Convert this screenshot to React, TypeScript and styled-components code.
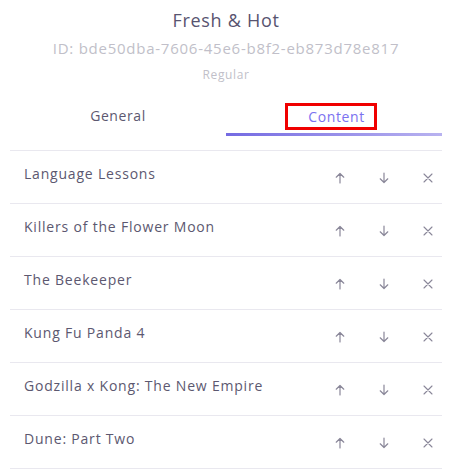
import styled, { createGlobalStyle } from 'styled-components';

const GlobalStyle = createGlobalStyle`
  html, body {
    margin: 0;
    padding: 0;
    background: #ffffff;
  }
  body {
    font-family: "Open Sans", "Liberation Sans", sans-serif;
  }
`;

const Panel = styled.div`
  width: 459px;
  height: 470px;
  overflow: hidden;
  box-sizing: border-box;
  padding: 0 17px 0 10px;
`;

const Header = styled.div`
  display: flex;
  flex-direction: column;
  align-items: center;
  padding-top: 7px;
`;

const Title = styled.h2`
  margin: 0;
  font-size: 18px;
  font-weight: 400;
  line-height: 26px;
  letter-spacing: 0.7px;
  color: #585470;
`;

const Identifier = styled.div`
  margin-top: 5px;
  font-size: 15px;
  line-height: 20px;
  letter-spacing: 0.75px;
  color: #c1bfc9;
`;

const Kind = styled.div`
  margin-top: 9px;
  font-size: 12px;
  line-height: 16px;
  letter-spacing: 0.6px;
  color: #c1bfc9;
`;

const Tabs = styled.div`
  display: grid;
  grid-template-columns: 1fr 1fr;
  margin-top: 16px;
`;

const Tab = styled.div<{ $active?: boolean }>`
  display: flex;
  justify-content: center;
  align-items: center;
  height: 32px;
  padding-bottom: 2px;
  font-size: 14px;
  letter-spacing: 0.6px;
  color: ${p => (p.$active ? '#7b72f0' : '#5c5870')};
  border-bottom: 3px solid transparent;
  border-image: ${p =>
    p.$active ? 'linear-gradient(90deg, #746ae2, #b9b3f0) 1' : 'none'};
`;

const Highlight = styled.span`
  box-sizing: border-box;
  display: inline-flex;
  align-items: center;
  height: 27px;
  padding: 0 9px 0 20px;
  border: 3px solid #f00000;
  margin-left: -6px;
  margin-top: 2px;
`;

const List = styled.div`
  margin-top: 14px;
  border-top: 1px solid #e9e8ef;
`;

const Row = styled.div`
  display: flex;
  align-items: center;
  height: 52px;
  border-bottom: 1px solid #e9e8ef;
  padding-left: 14px;
`;

const Name = styled.div`
  flex: 1;
  font-size: 14px;
  letter-spacing: 0.8px;
  color: #5c5870;
  margin-top: -8px;
`;

const Actions = styled.div`
  display: flex;
  align-items: center;
  gap: 24px;
  margin-right: 4px;
  margin-top: 2px;
`;

const IconButton = styled.button`
  width: 20px;
  height: 20px;
  padding: 0;
  border: none;
  background: none;
  display: flex;
  align-items: center;
  justify-content: center;
  color: #8a8799;
`;

const ArrowUp = () => (
  <svg width="12" height="12" viewBox="0 0 12 12" fill="none" stroke="currentColor" strokeWidth="1.2" strokeLinecap="round" strokeLinejoin="round">
    <path d="M6 11V1.5M2.2 5.2L6 1.5l3.8 3.7" />
  </svg>
);

const ArrowDown = () => (
  <svg width="12" height="12" viewBox="0 0 12 12" fill="none" stroke="currentColor" strokeWidth="1.2" strokeLinecap="round" strokeLinejoin="round">
    <path d="M6 1v9.5M2.2 6.8L6 10.5l3.8-3.7" />
  </svg>
);

const Close = () => (
  <svg width="10" height="10" viewBox="0 0 10 10" fill="none" stroke="currentColor" strokeWidth="1.1" strokeLinecap="round">
    <path d="M1 1l8 8M9 1L1 9" />
  </svg>
);

const ITEMS = [
  'Language Lessons',
  'Killers of the Flower Moon',
  'The Beekeeper',
  'Kung Fu Panda 4',
  'Godzilla x Kong: The New Empire',
  'Dune: Part Two',
];

export default function App() {
  return (
    <>
      <GlobalStyle />
      <Panel>
        <Header>
          <Title>Fresh &amp; Hot</Title>
          <Identifier>ID: bde50dba-7606-45e6-b8f2-eb873d78e817</Identifier>
          <Kind>Regular</Kind>
        </Header>
        <Tabs>
          <Tab>General</Tab>
          <Tab $active>
            <Highlight>Content</Highlight>
          </Tab>
        </Tabs>
        <List>
          {ITEMS.map(item => (
            <Row key={item}>
              <Name>{item}</Name>
              <Actions>
                <IconButton><ArrowUp /></IconButton>
                <IconButton><ArrowDown /></IconButton>
                <IconButton><Close /></IconButton>
              </Actions>
            </Row>
          ))}
        </List>
      </Panel>
    </>
  );
}
